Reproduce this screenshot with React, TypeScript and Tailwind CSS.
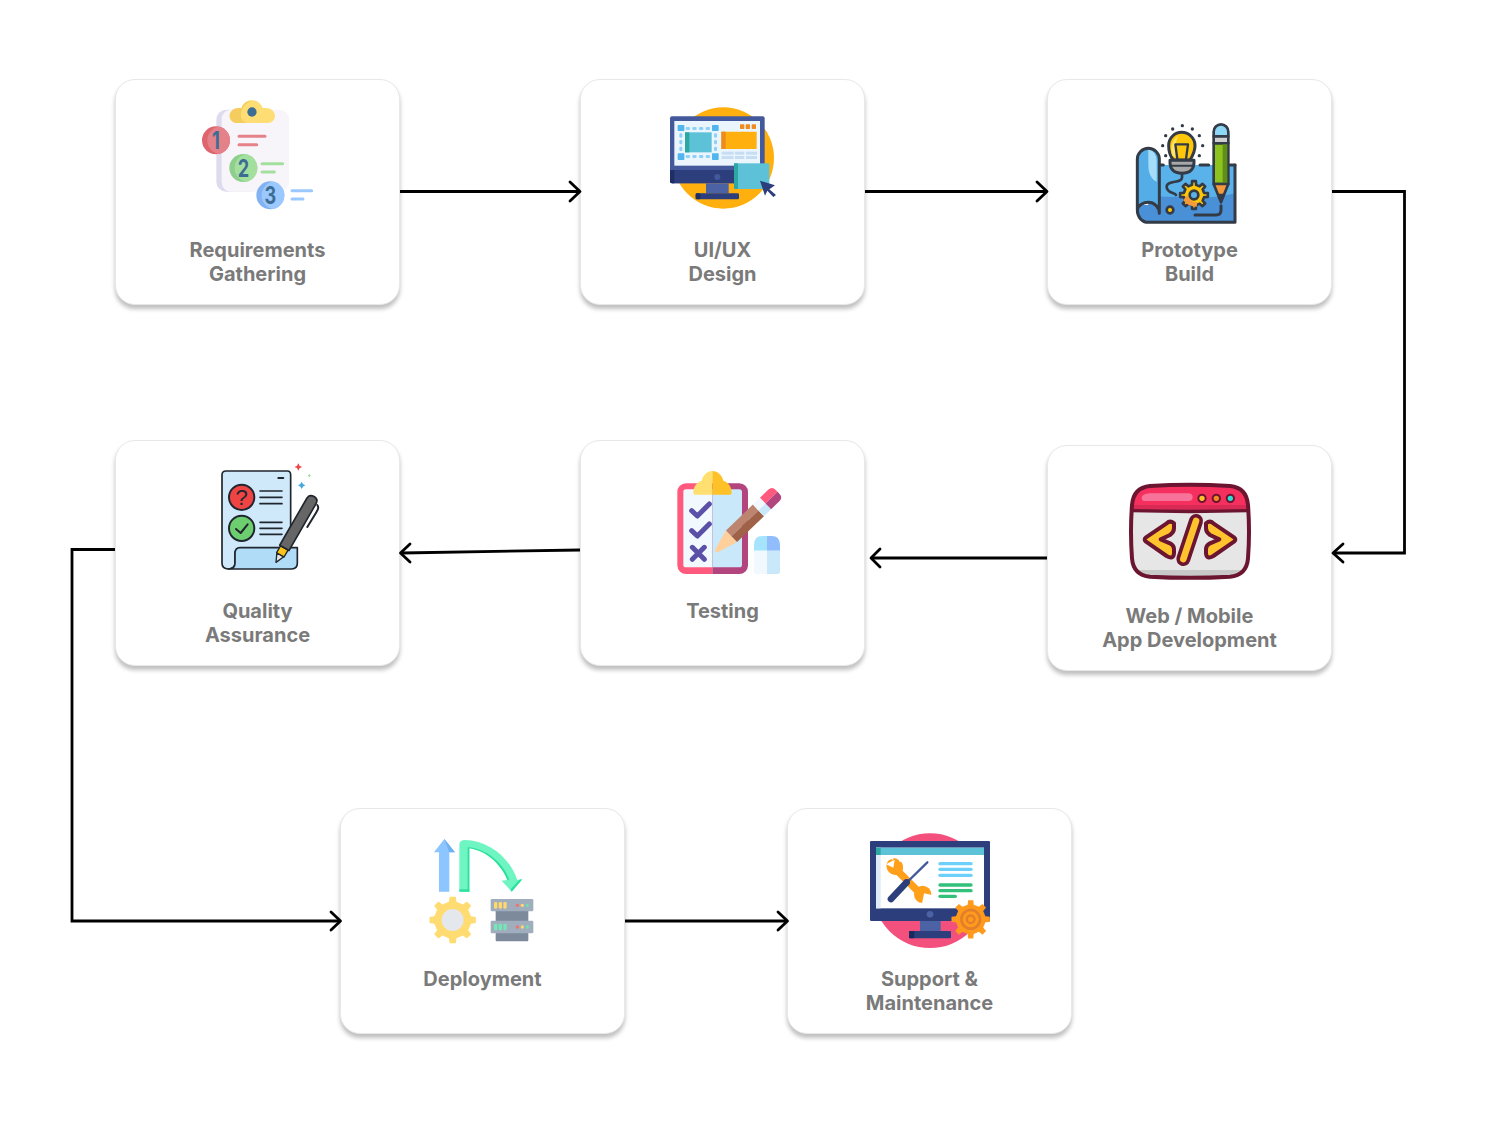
import React from "react";

function gear(cx: number, cy: number, R: number, r: number, n: number) {
  const pts: string[] = [];
  const step = (Math.PI * 2) / n;
  for (let i = 0; i < n; i++) {
    const a = i * step - Math.PI / 2;
    const w = step * 0.17;
    const w2 = step * 0.26;
    const P = (rad: number, ang: number) => `${(cx + rad * Math.cos(ang)).toFixed(1)},${(cy + rad * Math.sin(ang)).toFixed(1)}`;
    pts.push(P(r, a - w2), P(R, a - w), P(R, a + w), P(r, a + w2));
  }
  return "M" + pts.join(" L") + "Z";
}

function Card({ pos, left, top, ox, oy, lines, children }: { pos: string; left: number; top: number; ox: number; oy: number; lines: string[]; children: React.ReactNode }) {
  const vb = `${(left + 1 - ox) * 3} ${(top + 11 - oy) * 3} 849 420`;
  return (
    <div className={`absolute ${pos} flex h-[226px] w-[285px] flex-col items-center rounded-[20px] border border-[#e8e8e8] bg-white pt-[10px] shadow-[0_4px_4px_rgba(0,0,0,0.25)]`}>
      <svg viewBox={vb} className="h-[140px] w-[283px] shrink-0">
        {children}
      </svg>
      <div className="mt-[8px] text-center text-[20px] leading-[24px] font-bold text-[#7a7a7a]">
        {lines.map((l) => (
          <div key={l}>{l}</div>
        ))}
      </div>
    </div>
  );
}

function NumberDot({ id, cx, cy, light, dark, n }: { id: string; cx: number; cy: number; light: string; dark: string; n: string }) {
  return (
    <g>
      <clipPath id={id}>
        <circle cx={cx} cy={cy} r={42} />
      </clipPath>
      <circle cx={cx} cy={cy} r={42} fill={dark} />
      <circle cx={cx + 16} cy={cy} r={42} fill={light} clipPath={`url(#${id})`} />
      <text transform={`translate(${cx} ${cy + 26}) scale(0.8 1.08)`} textAnchor="middle" fontFamily="Inter, sans-serif" fontWeight={700} fontSize={68} fill="#3d6d93">
        {n}
      </text>
    </g>
  );
}

function Requirements() {
  return (
    <g>
      <rect x={64} y={53} width={130} height={246} rx={30} fill="#dedbee" />
      <rect x={80} y={53} width={202} height={246} rx={28} fill="#f7f5fa" />
      <path d="M104,72 C104,58 116,48 132,48 L140,48 C144,34 158,25 172,25 C186,25 198,34 203,48 L212,48 C228,48 240,58 240,72 C240,84 230,93 218,93 L126,93 C114,93 104,84 104,72Z" fill="#ffdd75" />
      <path d="M104,72 C104,58 116,48 132,48 L140,48 C144,34 158,25 172,25 C158,30 138,45 138,70 C138,82 145,90 155,93 L126,93 C114,93 104,84 104,72Z" fill="#f5cd5f" />
      <circle cx={171} cy={60} r={14} fill="#3d6d93" />
      <NumberDot id="d1" cx={63} cy={145} light="#e58189" dark="#de646e" n="1" />
      <NumberDot id="d2" cx={145} cy={228} light="#a4e09d" dark="#8fcf8d" n="2" />
      <NumberDot id="d3" cx={226} cy={310} light="#9bc9ff" dark="#82b2f2" n="3" />
      <g strokeWidth={9} strokeLinecap="round">
        <path d="M132,133 H210 M132,158 H185" stroke="#e58189" />
        <path d="M201,215 H263 M201,240 H238" stroke="#a4e09d" />
        <path d="M291,296 H350 M291,321 H324" stroke="#9bc9ff" />
      </g>
    </g>
  );
}

function UiUx() {
  const bars = [[214, 250], [254, 282], [287, 320]];
  return (
    <g>
      <circle cx={220} cy={189} r={152} fill="#ffb00f" />
      <rect x={60} y={64} width={284} height={201} rx={6} fill="#43599b" />
      <path d="M60,225 H344 V265 H66 Q60,265 60,259Z" fill="#2c3e7c" />
      <path d="M60,225 H73 V265 H66 Q60,265 60,259Z" fill="#1f2f63" />
      <rect x={73} y={78} width={257} height={134} fill="#eaf5fd" />
      <rect x={168} y={265} width={68} height={30} fill="#4b62a5" />
      <rect x={137} y={295} width={130} height={18} rx={4} fill="#2c3e7c" />
      <rect x={137} y={295} width={14} height={18} rx={4} fill="#1f2f63" />
      <circle cx={202} cy={246} r={9} fill="#43599b" />
      <rect x={83} y={90} width={20} height={18} rx={2} fill="#52b5ee" />
      <rect x={186} y={90} width={20} height={18} rx={2} fill="#52b5ee" />
      <rect x={83} y={175} width={20} height={20} rx={2} fill="#52b5ee" />
      <rect x={186} y={175} width={20} height={20} rx={2} fill="#52b5ee" />
      <g fill="#8dd0f8">
        {[107, 127, 147, 167].map((x) => (
          <g key={x}>
            <rect x={x} y={96} width={13} height={9} rx={4} />
            <rect x={x} y={180} width={13} height={9} rx={4} />
          </g>
        ))}
        {[115, 135, 155].map((y) => (
          <g key={y}>
            <rect x={88} y={y} width={9} height={13} rx={4} />
            <rect x={192} y={y} width={9} height={13} rx={4} />
          </g>
        ))}
      </g>
      <rect x={105} y={112} width={80} height={60} fill="#5dc1d8" />
      <rect x={105} y={112} width={13} height={60} fill="#2ca8a3" />
      <rect x={214} y={110} width={106} height={52} rx={2} fill="#ffb00f" />
      <rect x={214} y={110} width={13} height={52} fill="#ee8b1f" />
      {[270, 287, 305].map((x) => (
        <rect key={x} x={x} y={88} width={13} height={14} rx={2} fill="#ee8b1f" />
      ))}
      {bars.map(([a, b]) => (
        <g key={a} fill="#c7ddf3">
          <rect x={a + 1} y={170} width={b - a} height={9} />
          <rect x={a + 1} y={183} width={b - a} height={9} />
        </g>
      ))}
      <rect x={252} y={205} width={106} height={77} fill="#5dc1d8" />
      <rect x={252} y={205} width={12} height={77} fill="#2ca8a3" />
      <path d="M330,257 L375,271 L358,283 L378,300 L370,306 L352,287 L345,302Z" fill="#2c3e7c" />
    </g>
  );
}

function Prototype() {
  const s = "#333b47";
  const dots = [[187, 32], [158, 42], [217, 42], [137, 62], [238, 62], [128, 92], [248, 92], [137, 122], [238, 122]];
  return (
    <g strokeLinecap="round" strokeLinejoin="round">
      <path d="M118,150 H345 V322 H85 L85,260 H118Z" fill="#5ab2ea" />
      <path d="M85,245 C170,240 250,260 345,235 V322 H85Z" fill="#4a90d6" />
      <path d="M52,285 C52,305 65,322 85,322 H125 V270 H60Z" fill="#4a90d6" />
      <path d="M52,285 V133 a33,33 0 0 1 66,0 V295 C118,270 100,258 85,260 C65,260 52,270 52,285Z" fill="#55ade8" />
      <path d="M85,104 C100,104 110,120 110,140 V200 C95,195 85,175 85,150Z" fill="#a5dcf7" />
      <path d="M52,285 C52,305 65,322 85,322 H345 V150 M118,295 V133 a33,33 0 0 0 -66,0 V285 C55,270 70,262 85,262 C102,262 118,275 118,295" fill="none" stroke={s} strokeWidth={9} />
      <path d="M118,150 H130 M240,150 H266 M330,150 H345" stroke={s} strokeWidth={9} fill="none" />
      <path d="M225,300 H288 Q303,300 303,285 V272" fill="none" stroke={s} strokeWidth={9} />
      {dots.map(([x, y]) => (
        <circle key={`${x}-${y}`} cx={x} cy={y} r={5} fill={s} />
      ))}
      <path d="M186,175 V188 C186,205 140,195 140,215 C140,235 165,232 168,240" fill="none" stroke={s} strokeWidth={8} />
      <path d="M160,135 C150,122 146,108 146,92 C146,68 165,52 185,52 C205,52 225,68 225,92 C225,108 218,122 210,135Z" fill="#fec709" stroke={s} strokeWidth={9} />
      <path d="M157,122 C150,100 155,75 175,62 C165,80 165,105 172,130Z" fill="#ffe46a" />
      <path d="M172,132 L166,88 H204 L198,132" fill="none" stroke={s} strokeWidth={7} />
      <path d="M150,136 H222 Q224,175 186,175 Q148,175 150,136Z" fill="#a8a8a8" stroke={s} strokeWidth={9} />
      <path d="M154,152 H218" stroke={s} strokeWidth={6} />
      <path d={gear(222, 240, 42, 31, 8)} fill="#fec709" stroke={s} strokeWidth={8} />
      <path d="M190,255 C200,270 215,275 230,275 L232,262 C215,262 205,252 202,240Z" fill="#f59a3c" />
      <circle cx={222} cy={240} r={13} fill="#5ab2ea" stroke={s} strokeWidth={8} />
      <circle cx={150} cy={285} r={10} fill="#fec709" stroke={s} strokeWidth={8} />
      <path d="M281,64 V50 a22,22 0 0 1 44,0 V64Z" fill="#8dd6f5" stroke={s} strokeWidth={8} />
      <rect x={281} y={64} width={44} height={21} fill="#cfcfcf" stroke={s} strokeWidth={8} />
      <rect x={281} y={85} width={44} height={122} fill="#8dc21f" stroke={s} strokeWidth={8} />
      <rect x={308} y={88} width={14} height={116} fill="#5f8f16" />
      <path d="M281,207 H325 L303,262Z" fill="#f59a3c" stroke={s} strokeWidth={8} />
      <path d="M294,238 H312 L303,262Z" fill={s} stroke={s} strokeWidth={4} />
    </g>
  );
}

const CHEV = "M162,145 Q150,135 140,145 L78,187 Q70,193 78,200 L140,243 Q160,255 162,235 V222 Q162,212 150,205 L122,193 L150,180 Q162,172 162,160Z";

function Code() {
  const s = "#6b1530";
  const outer = "M90,33 Q210,25 330,33 Q380,38 384,90 Q390,170 384,250 Q380,300 330,305 Q210,312 90,305 Q40,300 36,250 Q30,170 36,90 Q40,38 90,33Z";
  return (
    <g>
      <clipPath id="win">
        <path d={outer} />
      </clipPath>
      <path d={outer} fill="#e6e6e6" />
      <g clipPath="url(#win)">
        <rect x={30} y={20} width={360} height={88} fill="#f5305f" />
        <rect x={30} y={90} width={360} height={18} fill="#d92a56" />
        <rect x={30} y={285} width={360} height={30} fill="#c8c8c8" />
      </g>
      <path d="M65,68 Q67,56 90,55 H205 Q218,55 218,66 Q218,78 205,78 H80 Q65,80 65,68Z" fill="#f8739a" />
      <path d={outer} fill="none" stroke={s} strokeWidth={12} />
      <path d="M36,107 Q210,112 384,107" fill="none" stroke={s} strokeWidth={10} />
      <circle cx={246} cy={70} r={11} fill="#fec32d" stroke={s} strokeWidth={6} />
      <circle cx={289} cy={70} r={11} fill="#f28c22" stroke={s} strokeWidth={6} />
      <circle cx={331} cy={70} r={11} fill="#2ce0d8" stroke={s} strokeWidth={6} />
      <path d={CHEV} fill="#fec32d" stroke={s} strokeWidth={12} strokeLinejoin="round" />
      <path d={CHEV} transform="translate(420 0) scale(-1 1)" fill="#fec32d" stroke={s} strokeWidth={12} strokeLinejoin="round" />
      <path d="M228,138 L190,252" stroke={s} strokeWidth={42} strokeLinecap="round" />
      <path d="M228,138 L190,252" stroke="#fec32d" strokeWidth={20} strokeLinecap="round" />
    </g>
  );
}

function Testing() {
  const clip = "M100,100 C100,75 115,65 125,62 C130,42 145,33 157,33 C170,33 185,42 190,62 C200,65 215,75 215,100 Q215,104 210,104 H105 Q100,104 100,100Z";
  return (
    <g>
      <clipPath id="tl"><rect x={0} y={0} width={157} height={400} /></clipPath>
      <clipPath id="tr"><rect x={157} y={0} width={300} height={400} /></clipPath>
      <g clipPath="url(#tl)">
        <rect x={52} y={70} width={212} height={272} rx={26} fill="#ff5a7e" />
        <rect x={70} y={88} width={176} height={234} rx={8} fill="#f1f9ff" />
        <path d={clip} fill="#ffdf70" />
      </g>
      <g clipPath="url(#tr)">
        <rect x={52} y={70} width={212} height={272} rx={26} fill="#b2457e" />
        <rect x={70} y={88} width={176} height={234} rx={8} fill="#c9e8fa" />
        <path d={clip} fill="#ffc128" />
      </g>
      <path d="M95,152 L112,168 L148,132 M95,212 L112,228 L148,192 M97,262 L133,298 M133,262 L97,298" fill="none" stroke="#5a50a8" strokeWidth={15} strokeLinecap="round" strokeLinejoin="round" />
      <g transform="translate(170 272) rotate(-44)">
        <path d="M-4,0 Q-4,-6 4,-7 L62,-24 V24 L4,7 Q-4,6 -4,0Z" fill="#ffd09b" />
        <rect x={62} y={-24} width={112} height={24} fill="#bd8570" />
        <rect x={62} y={0} width={112} height={24} fill="#9f6147" />
        <rect x={174} y={-24} width={30} height={24} fill="#f1f9ff" />
        <rect x={174} y={0} width={30} height={24} fill="#c9e8fa" />
        <path d="M204,-24 H238 Q254,-24 254,-8 V0 H204Z" fill="#ff5a7e" />
        <path d="M204,24 H238 Q254,24 254,8 V0 H204Z" fill="#b2457e" />
      </g>
      <path d="M321,228 H307 Q282,228 282,255 V272 H321Z" fill="#a6e4fd" />
      <path d="M321,228 H335 Q360,228 360,255 V272 H321Z" fill="#91bdfc" />
      <path d="M282,272 H321 V342 H290 Q282,342 282,334Z" fill="#f1f9ff" />
      <path d="M360,272 H321 V342 H352 Q360,342 360,334Z" fill="#c9e8fa" />
    </g>
  );
}

function Quality() {
  const s = "#20262e";
  return (
    <g strokeLinecap="round" strokeLinejoin="round">
      <path d="M36,60 Q36,48 48,48 H232 Q242,48 242,60 V290 H75 V325 Q75,342 55,342 Q36,342 36,325Z" fill="#cfe9fb" stroke={s} strokeWidth={5} />
      <path d="M75,325 V295 Q75,278 90,278 H262 V325 Q262,342 245,342 H55 Q75,342 75,325Z" fill="#b0dcf7" stroke={s} strokeWidth={5} />
      <path d="M205,69 H220" stroke={s} strokeWidth={6} />
      <circle cx={95} cy={127} r={38} fill="#ef4444" stroke={s} strokeWidth={6} />
      <text x={95} y={150} textAnchor="middle" fontFamily="'Liberation Sans', sans-serif" fontSize={66} fill={s}>?</text>
      <circle cx={95} cy={220} r={38} fill="#6dce6f" stroke={s} strokeWidth={6} />
      <path d="M78,222 L92,234 L113,208" fill="none" stroke={s} strokeWidth={6} />
      <path d="M150,108 H216 M150,127 H216 M150,146 H216 M150,202 H216 M150,220 H216 M150,238 H216" stroke={s} strokeWidth={5} />
      <path d="M322,150 Q328,158 320,170 L292,216" fill="none" stroke={s} strokeWidth={6} />
      <g transform="translate(198 322) rotate(-60)">
        <path d="M0,0 L26,-12 V12Z" fill="#e6e6e6" stroke={s} strokeWidth={4} />
        <rect x={26} y={-13} width={24} height={26} fill="#fcc419" stroke={s} strokeWidth={4} />
        <path d="M50,-16 H212 Q228,-16 228,0 Q228,16 212,16 H50Z" fill="#666666" stroke={s} strokeWidth={5} />
      </g>
      <path d="M265,25 L269,33 L277,36 L269,39 L265,47 L261,39 L253,36 L261,33Z" fill="#ef4444" />
      <path d="M298,57 L300,60 L303,62 L300,64 L298,67 L296,64 L293,62 L296,60Z" fill="#8ddb8d" />
      <path d="M275,80 L279,87 L286,91 L279,95 L275,102 L271,95 L264,91 L271,87Z" fill="#4aa8e0" />
    </g>
  );
}

function Deployment() {
  return (
    <g>
      <path d="M42,67 L73,27 L105,67 H88 V185 H57 V67Z" fill="#8cc5ff" />
      <path d="M73,27 L105,67 H88Z" fill="#6fb0f0" />
      <path d="M118,185 V45 Q118,30 135,30 C205,32 268,80 292,150 L307,148 L275,185 L245,152 L262,150 C245,105 200,62 148,55 V185Z" fill="#6ff5c2" />
      <path d="M118,185 V178 H148 V185Z" fill="#2be09c" />
      <path d="M143,52 V185 H148 V55 C200,62 245,105 262,150 L268,149 C250,100 200,55 143,52Z" fill="#2be09c" />
      <path d="M307,148 L275,185 L272,178 L298,149Z" fill="#2be09c" />
      <path d={gear(98, 270, 70, 56, 8)} fill="#ffdc72" />
      <circle cx={98} cy={270} r={52} fill="#ffdc72" />
      <circle cx={98} cy={270} r={33} fill="#e4e7ec" />
      <rect x={227} y={243} width={98} height={30} fill="#7d8a9b" />
      <rect x={227} y={308} width={98} height={26} rx={3} fill="#7d8a9b" />
      <rect x={212} y={207} width={128} height={37} rx={4} fill="#a0adbd" />
      <rect x={212} y={272} width={128} height={38} rx={4} fill="#a0adbd" />
      {[222, 236, 250].map((x) => (
        <g key={x}>
          <rect x={x} y={216} width={10} height={20} rx={4} fill="#ffd76b" />
          <rect x={x} y={281} width={10} height={20} rx={4} fill="#72e8b6" />
        </g>
      ))}
      {[226, 291].map((y) => (
        <g key={y}>
          <circle cx={292} cy={y} r={5} fill="#f2706e" />
          <circle cx={307} cy={y} r={5} fill="#ffd76b" />
          <circle cx={322} cy={y} r={5} fill="#6fe0b2" />
        </g>
      ))}
    </g>
  );
}

function Support() {
  return (
    <g>
      <circle cx={210} cy={197} r={172} fill="#f4507e" />
      <rect x={30} y={48} width={360} height={240} rx={4} fill="#2c3e7c" />
      <rect x={48} y={68} width={324} height={182} fill="#ffffff" />
      <rect x={48} y={68} width={14} height={182} fill="#dfeafb" />
      <rect x={48} y={68} width={324} height={22} fill="#5dc1d8" />
      <rect x={48} y={68} width={14} height={22} fill="#2ca8a3" />
      <circle cx={210} cy={268} r={10} fill="#4b62a5" />
      <rect x={180} y={288} width={62} height={30} fill="#4b62a5" />
      <rect x={147} y={318} width={126} height={22} rx={3} fill="#2c3e7c" />
      <rect x={147} y={318} width={16} height={22} rx={3} fill="#1a2a5c" />
      <path d="M112,137 L178,203" stroke="#ff9f1a" strokeWidth={22} strokeLinecap="round" />
      <path d="M92,103 C78,110 76,125 84,138 C92,150 108,153 120,148 C130,140 132,125 125,112" fill="#ff9f1a" />
      <path d="M100,100 C115,100 120,108 120,118 L110,126 L97,120Z" fill="#ff9f1a" />
      <path d="M78,118 L100,128 L104,104 Z" fill="#ffffff" />
      <circle cx={188} cy={208} r={26} fill="#ff9f1a" />
      <path d="M216,210 L192,205 L186,236 L212,238Z" fill="#ffffff" />
      <path d="M145,168 L202,112" stroke="#43599b" strokeWidth={7} strokeLinecap="round" />
      <path d="M93,222 L136,176" stroke="#2c3e7c" strokeWidth={20} strokeLinecap="round" />
      <circle cx={140} cy={172} r={10} fill="#2c3e7c" />
      <g fill="#6dd0fb">
        <rect x={235} y={111} width={103} height={10} rx={5} />
        <rect x={235} y={128} width={103} height={10} rx={5} />
        <rect x={235} y={146} width={103} height={10} rx={5} />
      </g>
      <g fill="#33c07a">
        <rect x={235} y={175} width={103} height={10} rx={5} />
        <rect x={235} y={192} width={103} height={10} rx={5} />
        <rect x={235} y={209} width={56} height={10} rx={5} />
      </g>
      <path d={gear(332, 283, 58, 45, 8)} fill="#ff9a1d" />
      <circle cx={332} cy={283} r={42} fill="#ff9a1d" />
      <circle cx={332} cy={283} r={32} fill="#e27f2a" />
      <circle cx={332} cy={283} r={24} fill="#ff9a1d" />
      <circle cx={332} cy={283} r={15} fill="#e27f2a" />
      <circle cx={332} cy={283} r={8} fill="#ff9a1d" />
    </g>
  );
}

function Connectors() {
  const lines = [
    "M400,191.5 H579",
    "M865,191.5 H1046",
    "M1332,191.5 H1404.5 V553 H1333",
    "M1047,558 H872",
    "M580,550 L402,553",
    "M115,549.5 H72 V921 H339",
    "M625,921 H787",
  ];
  const heads = [
    "M570,182 L580,191.5 L570,201",
    "M1037,182 L1047,191.5 L1037,201",
    "M1343,544 L1333,553 L1343,562",
    "M880,549 L871,558 L880,567",
    "M410,544 L400.5,553 L410,562",
    "M331,912 L340.5,921 L331,930",
    "M778,912 L787.5,921 L778,930",
  ];
  return (
    <svg viewBox="0 0 1498 1141" className="pointer-events-none absolute inset-0 h-[1141px] w-[1498px]">
      {lines.map((d) => (
        <path key={d} d={d} fill="none" stroke="#000000" strokeWidth={2.8} />
      ))}
      {heads.map((d) => (
        <path key={d} d={d} fill="none" stroke="#000000" strokeWidth={2.8} strokeLinecap="round" strokeLinejoin="round" />
      ))}
    </svg>
  );
}

export default function App() {
  return (
    <div className="relative h-[1141px] w-[1498px] overflow-hidden bg-white font-['Inter',sans-serif]">
      <Card pos="left-[115px] top-[79px]" left={115} top={79} ox={195} oy={92} lines={["Requirements", "Gathering"]}><Requirements /></Card>
      <Card pos="left-[580px] top-[79px]" left={580} top={79} ox={650} oy={95} lines={["UI/UX", "Design"]}><UiUx /></Card>
      <Card pos="left-[1047px] top-[79px]" left={1047} top={79} ox={1120} oy={115} lines={["Prototype", "Build"]}><Prototype /></Card>
      <Card pos="left-[1047px] top-[445px]" left={1047} top={445} ox={1120} oy={475} lines={["Web / Mobile", "App Development"]}><Code /></Card>
      <Card pos="left-[580px] top-[440px]" left={580} top={440} ox={660} oy={460} lines={["Testing"]}><Testing /></Card>
      <Card pos="left-[115px] top-[440px]" left={115} top={440} ox={210} oy={455} lines={["Quality", "Assurance"]}><Quality /></Card>
      <Card pos="left-[340px] top-[808px]" left={340} top={808} ox={420} oy={830} lines={["Deployment"]}><Deployment /></Card>
      <Card pos="left-[787px] top-[808px]" left={787} top={808} ox={860} oy={825} lines={["Support &", "Maintenance"]}><Support /></Card>
      <Connectors />
    </div>
  );
}
